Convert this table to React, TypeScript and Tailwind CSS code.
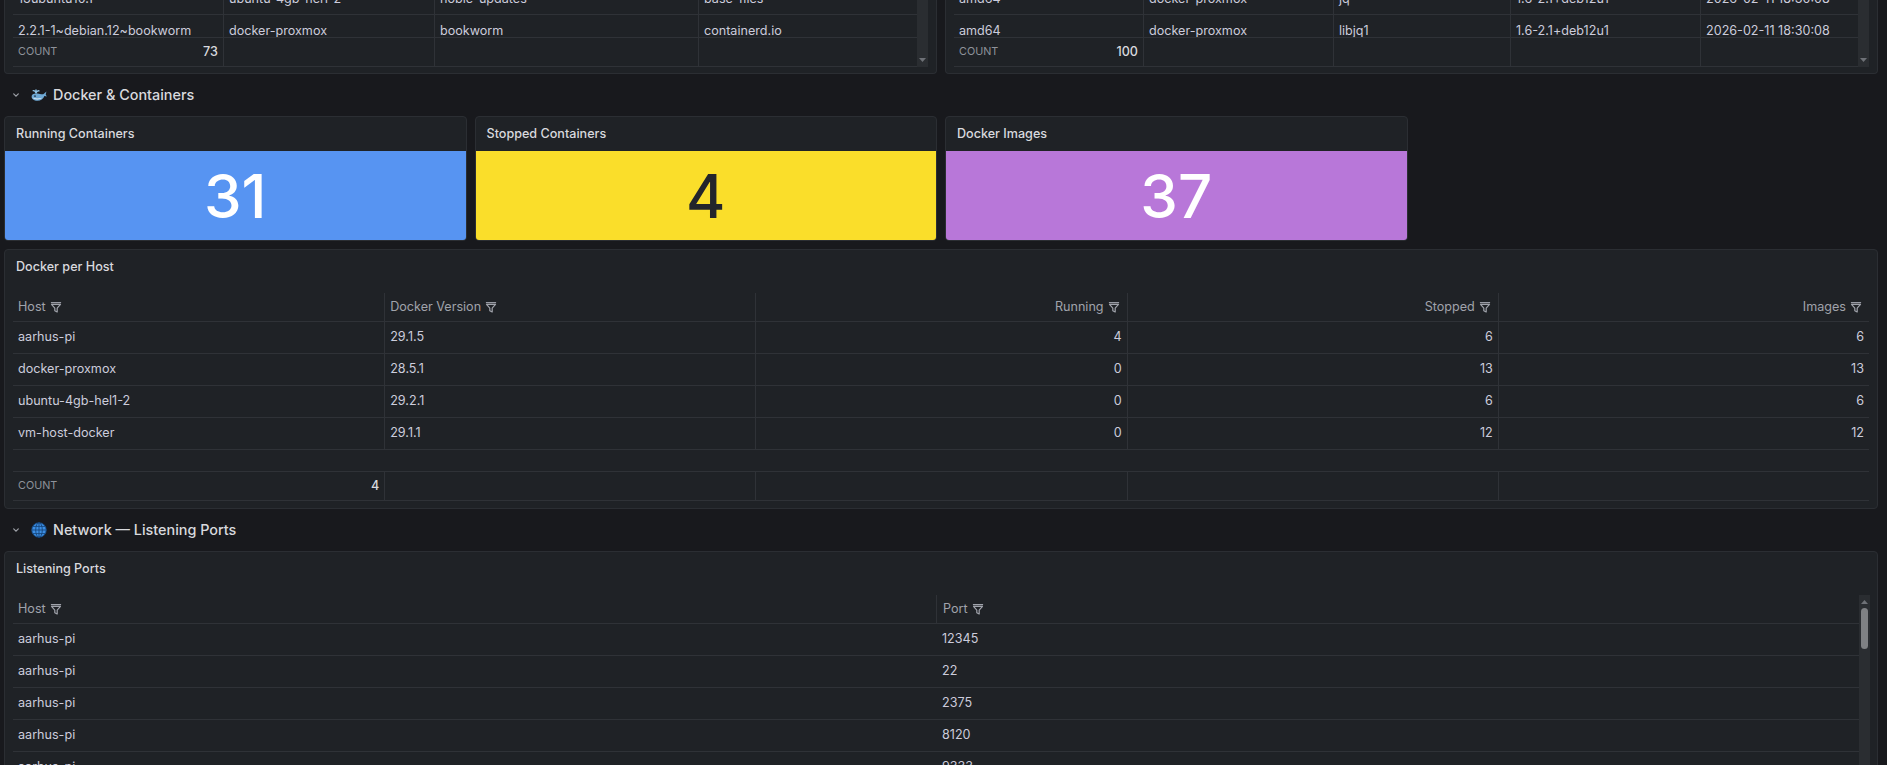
import React from "react";

const line = "border-[#2f3237]";

function Funnel() {
  return (
    <svg width="12" height="12" viewBox="0 0 16 16" fill="none" stroke="currentColor" strokeWidth="1.6" strokeLinejoin="round" className="shrink-0">
      <path d="M1.2 2.2h13.6" />
      <path d="M2 4.6h12L9.6 9.4v5.2l-3.2-1.7V9.4z" />
    </svg>
  );
}

function Chevron() {
  return (
    <svg width="6" height="4" viewBox="0 0 6 4" fill="none" stroke="#9da0a7" strokeWidth="1.2" strokeLinecap="round" className="ml-[9px]">
      <path d="M0.7 0.8l2.3 2.3 2.3-2.3" />
    </svg>
  );
}

function Whale() {
  return (
    <svg width="16" height="16" viewBox="0 0 16 16" className="ml-[12px]">
      <path d="M5 6.2C4.6 4.6 3.6 3.6 2.2 3.7M5 6.2C5.5 4.5 6.6 3.6 8 3.8M5 6.2V2.8" stroke="#8ec3e6" strokeWidth="1.3" fill="none" strokeLinecap="round" />
      <path d="M0.6 9.5C0.6 7 3.1 6.2 6.5 6.6C9.6 7 11.6 8.2 13.2 6.4L15.4 4.4L14.7 7.6L15.8 9.5L13.4 8.9C12.4 11.8 9.8 13.8 6.4 13.8C2.8 13.8 0.6 12 0.6 9.5Z" fill="#6ea8d4" />
      <path d="M1.2 10.6C3.4 13 8.7 13.1 11.2 10.8C8.3 11.9 4.2 11.9 1.2 10.6Z" fill="#e3eef6" />
      <circle cx="4" cy="9.1" r="0.85" fill="#1b2a3a" />
    </svg>
  );
}

function Globe() {
  return (
    <svg width="16" height="16" viewBox="0 0 16 16" className="ml-[12px]">
      <circle cx="8" cy="8" r="7.3" fill="#3c8ee3" />
      <g fill="none" stroke="#16467c" strokeWidth="0.9">
        <circle cx="8" cy="8" r="7.3" />
        <ellipse cx="8" cy="8" rx="3.3" ry="7.3" />
        <path d="M8 0.7v14.6M0.7 8h14.6M1.8 4.4h12.4M1.8 11.6h12.4" />
      </g>
    </svg>
  );
}

function SectionHeader({ icon, title }: { icon: React.ReactNode; title: string }) {
  return (
    <div className="h-[42px] flex items-center">
      <Chevron />
      {icon}
      <span className="ml-[6px] text-[14.4px] font-medium text-[#d8d9de]">{title}</span>
    </div>
  );
}

function Stat({ title, value, bg, fg }: { title: string; value: string; bg: string; fg: string }) {
  return (
    <div className="h-[125px] flex flex-col rounded-[4px] border border-[#2b2e33] bg-[#1f2226] overflow-hidden">
      <div className="h-[34px] shrink-0 flex items-center px-[11px] text-[12.6px] font-medium text-[#d8d9de]">{title}</div>
      <div className={`flex-1 flex items-center justify-center ${bg}`}>
        <span className={`text-[60px] font-medium leading-none ${fg}`}>{value}</span>
      </div>
    </div>
  );
}

function TopPanel({
  cols,
  cut,
  row,
  count,
}: {
  cols: string;
  cut: string[];
  row: string[];
  count: string;
}) {
  const cells = (vals: string[]) =>
    vals.map((v, i) => (
      <div key={i} className={`h-[32px] flex items-center px-[5px] whitespace-nowrap ${i > 0 ? `border-l ${line}` : ""}`}>
        {v}
      </div>
    ));
  return (
    <div className="h-[74px] flex flex-col justify-end">
      <div className="border-x border-b border-[#2b2e33] rounded-b-[4px] bg-[#1f2226] px-[8px] pb-[6px] flex">
        <div className="flex-1 text-[12.6px] text-[#ccccdc]">
          <div className={`h-[15px] overflow-hidden border-b ${line}`}>
            <div className={`grid ${cols} -mt-[17px]`}>{cells(cut)}</div>
          </div>
          <div className={`h-[23px] overflow-hidden border-b ${line}`}>
            <div className={`grid ${cols}`}>{cells(row)}</div>
          </div>
          <div className={`h-[29px] grid ${cols} border-b ${line}`}>
            <div className="flex items-center justify-between px-[5px]">
              <span className="text-[10.8px] text-[#8e929a]">COUNT</span>
              <span className="font-medium text-[#d8d9de]">{count}</span>
            </div>
            {row.slice(1).map((_, i) => (
              <div key={i} className={`border-l ${line}`} />
            ))}
          </div>
        </div>
        <div className="w-[11px] bg-[#2a2d31] flex flex-col justify-end items-center pb-[5px]">
          <svg width="7" height="4" viewBox="0 0 7 4">
            <path d="M0 0h7L3.5 4z" fill="#6e7177" />
          </svg>
        </div>
      </div>
    </div>
  );
}

const dockerRows = [
  ["aarhus-pi", "29.1.5", "4", "6", "6"],
  ["docker-proxmox", "28.5.1", "0", "13", "13"],
  ["ubuntu-4gb-hel1-2", "29.2.1", "0", "6", "6"],
  ["vm-host-docker", "29.1.1", "0", "12", "12"],
];

const dockerHead = [
  { label: "Host", right: false },
  { label: "Docker Version", right: false },
  { label: "Running", right: true },
  { label: "Stopped", right: true },
  { label: "Images", right: true },
];

function DockerPerHost() {
  return (
    <div className="h-[260px] rounded-[4px] border border-[#2b2e33] bg-[#1f2226] flex flex-col">
      <div className="h-[35px] shrink-0 flex items-center px-[11px] text-[12.6px] font-medium text-[#d8d9de]">Docker per Host</div>
      <div className="px-[8px] pt-[8px] text-[12.6px]">
        <div className={`grid grid-cols-5 h-[29px] border-b ${line}`}>
          {dockerHead.map((h, i) => (
            <div
              key={h.label}
              className={`flex items-center gap-[4px] px-[5px] text-[#a0a3ab] ${h.right ? "justify-end pr-[7px]" : ""} ${i > 0 ? `border-l ${line}` : ""}`}
            >
              {h.label}
              <Funnel />
            </div>
          ))}
        </div>
        {dockerRows.map((r) => (
          <div key={r[0]} className={`grid grid-cols-5 h-[32px] border-b ${line} text-[#ccccdc]`}>
            {r.map((v, i) => (
              <div key={i} className={`flex items-center px-[5px] ${i >= 2 ? "justify-end" : ""} ${i > 0 ? `border-l ${line}` : ""}`}>
                {v}
              </div>
            ))}
          </div>
        ))}
        <div className={`h-[22px] border-b ${line}`} />
        <div className={`grid grid-cols-5 h-[29px] border-b ${line}`}>
          <div className="flex items-center justify-between px-[5px]">
            <span className="text-[10.8px] text-[#8e929a]">COUNT</span>
            <span className="font-medium text-[#d8d9de]">4</span>
          </div>
          {[1, 2, 3, 4].map((i) => (
            <div key={i} className={`border-l ${line}`} />
          ))}
        </div>
      </div>
    </div>
  );
}

const ports = ["12345", "22", "2375", "8120", "9333", "9100"];

function ListeningPorts() {
  return (
    <div className="h-[240px] rounded-t-[4px] border border-[#2b2e33] bg-[#1f2226] flex flex-col overflow-hidden">
      <div className="h-[35px] shrink-0 flex items-center px-[11px] text-[12.6px] font-medium text-[#d8d9de]">Listening Ports</div>
      <div className="pl-[8px] pr-[7px] pt-[8px] text-[12.6px] flex">
        <div className="flex-1">
          <div className={`grid grid-cols-2 h-[29px] border-b ${line} text-[#a0a3ab]`}>
            <div className="flex items-center gap-[4px] px-[5px]">
              Host
              <Funnel />
            </div>
            <div className={`flex items-center gap-[4px] px-[6px] border-l ${line}`}>
              Port
              <Funnel />
            </div>
          </div>
          {ports.map((p, i) => (
            <div key={i} className={`grid grid-cols-2 h-[32px] border-b ${line} text-[#ccccdc]`}>
              <div className="flex items-center px-[5px]">aarhus-pi</div>
              <div className="flex items-center px-[6px]">{p}</div>
            </div>
          ))}
        </div>
        <div className="w-[11px] bg-[#2a2d31] flex flex-col items-center pt-[5px]">
          <svg width="7" height="4" viewBox="0 0 7 4">
            <path d="M3.5 0L7 4H0z" fill="#6e7177" />
          </svg>
          <div className="mt-[4px] w-[7px] h-[41px] rounded-full bg-[#7f8184]" />
        </div>
      </div>
    </div>
  );
}

export default function App() {
  return (
    <div className="w-[1887px] h-[765px] overflow-hidden bg-[#18191d] pl-[4px] pr-[9px] font-['Inter','Noto_Sans',sans-serif]">
      <div className="grid grid-cols-2 gap-2">
        <TopPanel
          cols="grid-cols-[210px_211px_264px_1fr]"
          cut={["13ubuntu10.1", "ubuntu-4gb-hel1-2", "noble-updates", "base-files"]}
          row={["2.2.1-1~debian.12~bookworm", "docker-proxmox", "bookworm", "containerd.io"]}
          count="73"
        />
        <TopPanel
          cols="grid-cols-[189px_190px_177px_190px_1fr]"
          cut={["amd64", "docker-proxmox", "jq", "1.6-2.1+deb12u1", "2026-02-11 18:30:08"]}
          row={["amd64", "docker-proxmox", "libjq1", "1.6-2.1+deb12u1", "2026-02-11 18:30:08"]}
          count="100"
        />
      </div>

      <SectionHeader icon={<Whale />} title="Docker & Containers" />

      <div className="grid grid-cols-4 gap-2">
        <Stat title="Running Containers" value="31" bg="bg-[#5794f2]" fg="text-white" />
        <Stat title="Stopped Containers" value="4" bg="bg-[#fade2a]" fg="text-[#23252b]" />
        <Stat title="Docker Images" value="37" bg="bg-[#b877d9]" fg="text-white" />
      </div>

      <div className="mt-[8px]">
        <DockerPerHost />
      </div>

      <SectionHeader icon={<Globe />} title="Network — Listening Ports" />

      <ListeningPorts />
    </div>
  );
}
